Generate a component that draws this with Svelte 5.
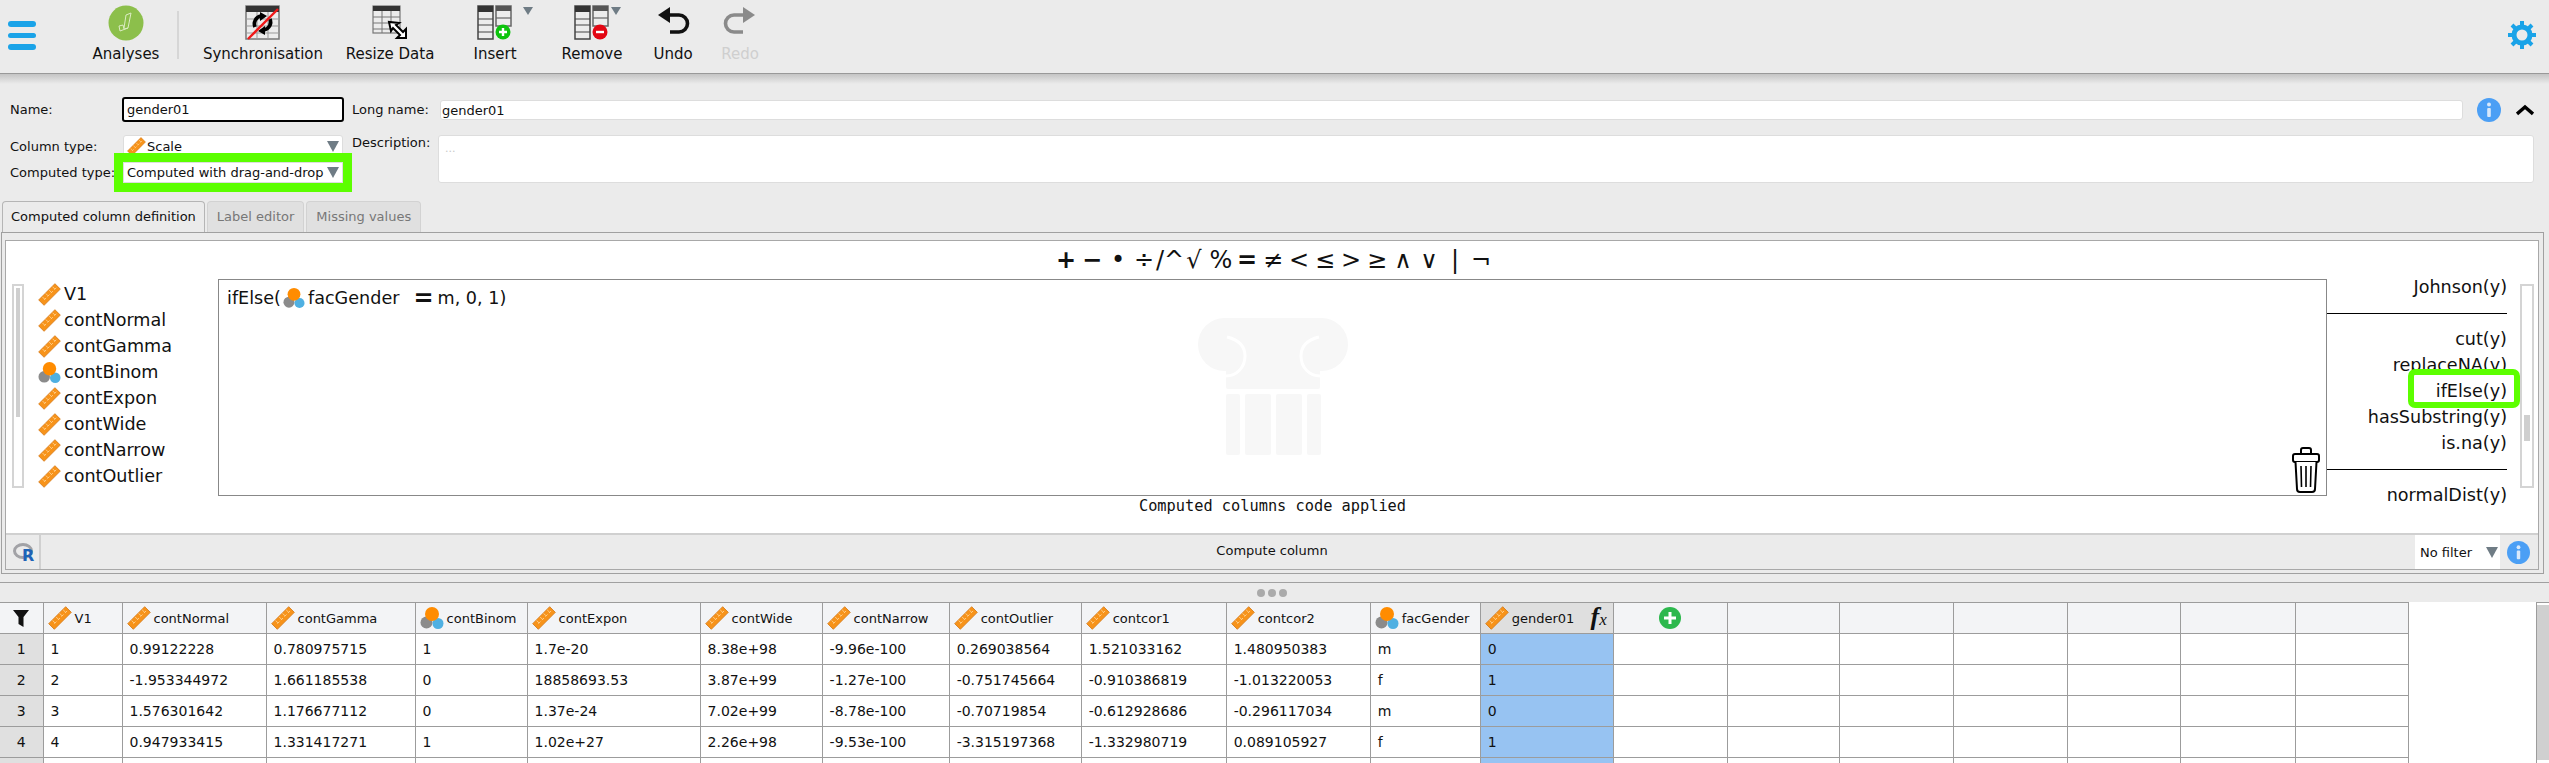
<script>
  const columns = [
    { name: 'V1', type: 'scale', width: 79 },
    { name: 'contNormal', type: 'scale', width: 144 },
    { name: 'contGamma', type: 'scale', width: 149 },
    { name: 'contBinom', type: 'nominal', width: 112 },
    { name: 'contExpon', type: 'scale', width: 173 },
    { name: 'contWide', type: 'scale', width: 122 },
    { name: 'contNarrow', type: 'scale', width: 127 },
    { name: 'contOutlier', type: 'scale', width: 132 },
    { name: 'contcor1', type: 'scale', width: 145 },
    { name: 'contcor2', type: 'scale', width: 144 },
    { name: 'facGender', type: 'nominal', width: 110 },
    { name: 'gender01', type: 'scale', width: 133, computed: true }
  ];
  const emptyWidths = [114, 112, 114, 114, 113, 115, 113];

  const rows = [
    ['1', '0.99122228', '0.780975715', '1', '1.7e-20', '8.38e+98', '-9.96e-100', '0.269038564', '1.521033162', '1.480950383', 'm', '0'],
    ['2', '-1.953344972', '1.661185538', '0', '18858693.53', '3.87e+99', '-1.27e-100', '-0.751745664', '-0.910386819', '-1.013220053', 'f', '1'],
    ['3', '1.576301642', '1.176677112', '0', '1.37e-24', '7.02e+99', '-8.78e-100', '-0.70719854', '-0.612928686', '-0.296117034', 'm', '0'],
    ['4', '0.947933415', '1.331417271', '1', '1.02e+27', '2.26e+98', '-9.53e-100', '-3.315197368', '-1.332980719', '0.089105927', 'f', '1'],
    ['', '', '', '', '', '', '', '', '', '', '', '']
  ];

  const variables = [
    { name: 'V1', type: 'scale' },
    { name: 'contNormal', type: 'scale' },
    { name: 'contGamma', type: 'scale' },
    { name: 'contBinom', type: 'nominal' },
    { name: 'contExpon', type: 'scale' },
    { name: 'contWide', type: 'scale' },
    { name: 'contNarrow', type: 'scale' },
    { name: 'contOutlier', type: 'scale' }
  ];

  const functions = ['Johnson(y)', null, 'cut(y)', 'replaceNA(y)', 'ifElse(y)', 'hasSubstring(y)', 'is.na(y)', null, 'normalDist(y)'];

  // shift = distance to pull a glyph towards its neighbour
  const operators = [
    { g: '+', bold: true, shift: 0 },
    { g: '−', bold: true, shift: 0 },
    { g: '•', shift: 0 },
    { g: '÷', shift: 0 },
    { g: '/', shift: -10 },
    { g: '^', shift: -12 },
    { g: '√', shift: -6 },
    { g: '%', shift: 1 },
    { g: '=', bold: true, shift: 0 },
    { g: '≠', shift: 0 },
    { g: '<', shift: 0 },
    { g: '≤', shift: 0 },
    { g: '>', shift: 0 },
    { g: '≥', shift: 0 },
    { g: '∧', shift: 0 },
    { g: '∨', shift: 0 },
    { g: '|', shift: 0 },
    { g: '¬', shift: 0 }
  ];
</script>

{#snippet ruler(size)}
  <svg class="type-icon" width={size} height={size} viewBox="0 0 24 24">
    <g transform="rotate(45 12 12)">
      <rect x="8" y="0" width="8" height="24" fill="#f7931a" stroke="#d0700a" stroke-width="0.700" />
      <path d="M12 2v3M12 7v3M12 12v3M12 17v3M8.500 4h3.500M8.500 9h3.500M8.500 14h3.500M8.500 19h3.500" stroke="#ffcf8c" stroke-width="0.900" fill="none" />
    </g>
  </svg>
{/snippet}

{#snippet nominal(size)}
  <svg class="type-icon" width={size} height={size} viewBox="0 0 24 24">
    <circle cx="6.500" cy="16.500" r="6" fill="#8b8b8b" />
    <circle cx="18" cy="17.500" r="5.500" fill="#4fb0e2" />
    <circle cx="12" cy="8" r="7" fill="#ff8c00" />
  </svg>
{/snippet}

{#snippet typeIcon(type, size)}
  {#if type === 'scale'}
    {@render ruler(size)}
  {:else}
    {@render nominal(size)}
  {/if}
{/snippet}

{#snippet info(size)}
  <svg width={size} height={size} viewBox="0 0 24 24">
    <circle cx="12" cy="12" r="12" fill="#4b9ff5" />
    <rect x="10.200" y="10" width="3.600" height="9" rx="1" fill="#d9e9fb" />
    <circle cx="12" cy="6.500" r="2" fill="#d9e9fb" />
  </svg>
{/snippet}

{#snippet splitTable()}
  <rect x="1" y="1" width="15" height="33" fill="#ececec" stroke="#444" stroke-width="1.500" />
  <rect x="1" y="1" width="15" height="6" fill="#333" />
  <path d="M1 14h15M1 20h15M1 27h15" stroke="#444" stroke-width="1.200" />
  <rect x="19" y="1" width="15" height="20" fill="#ececec" stroke="#666" stroke-width="1.500" />
  <rect x="19" y="1" width="15" height="5" fill="#555" />
  <path d="M19 13h15" stroke="#666" stroke-width="1.200" />
{/snippet}

<div class="page">
  <header class="toolbar">
    <div class="menu">
      <span></span><span></span><span></span>
    </div>
    <div class="tool">
      <svg width="36" height="36" viewBox="0 0 36 36">
        <circle cx="18" cy="18" r="17.500" fill="#8cbf4b" />
        <path d="M11 21l4-1 1 4 4-1 3-15-5 2-2 13M11 21l1 5 8-3" stroke="#dcecc4" stroke-width="1" fill="none" />
      </svg>
      <span>Analyses</span>
    </div>
    <div class="tool-sep"></div>
    <div class="tool">
      <svg width="36" height="36" viewBox="0 0 36 36">
        <rect x="1" y="1" width="33" height="33" fill="#ececec" stroke="#777" stroke-width="1.500" />
        <rect x="1" y="1" width="33" height="6" fill="#333" />
        <path d="M1 14h33M1 21h33M1 28h33M12 7v27M23 7v27" stroke="#999" stroke-width="1" />
        <path d="M10 22a8 8 0 0 1 6-11" stroke="#000" stroke-width="3.600" fill="none" />
        <path d="M25 14a8 8 0 0 1-6 11" stroke="#000" stroke-width="3.600" fill="none" />
        <path d="M15 7l7 4-7 5zM20 30l-7-4 7-5z" fill="#000" />
        <path d="M3 34L33 4" stroke="#f01818" stroke-width="2.400" />
      </svg>
      <span>Synchronisation</span>
    </div>
    <div class="tool">
      <svg width="36" height="36" viewBox="0 0 36 36">
        <rect x="1" y="1" width="27" height="27" fill="#ececec" stroke="#777" stroke-width="1.200" />
        <rect x="1" y="1" width="27" height="5" fill="#333" />
        <path d="M1 12h27M1 18h27M1 24h27M10 6v22M19 6v22" stroke="#777" stroke-width="1" />
        <path d="M18 20l2 9 2-3 7 7-3 3 9 0 0-9-3 3-7-7 3-2z" fill="#fff" stroke="#000" stroke-width="2" transform="translate(-1 -3)" />
      </svg>
      <span>Resize Data</span>
    </div>
    <div class="tool">
      <svg class="wide" width="36" height="36" viewBox="0 0 36 36">
        {@render splitTable()}
        <circle cx="26" cy="27" r="7.500" fill="#0cc40c" />
        <path d="M26 23v8M22 27h8" stroke="#fff" stroke-width="2.400" />
      </svg>
      <i class="drop"></i>
      <span>Insert</span>
    </div>
    <div class="tool">
      <svg class="wide" width="36" height="36" viewBox="0 0 36 36">
        {@render splitTable()}
        <circle cx="26" cy="27" r="7.500" fill="#e30613" />
        <path d="M22 27h8" stroke="#fff" stroke-width="2.400" />
      </svg>
      <i class="drop"></i>
      <span>Remove</span>
    </div>
    <div class="tool">
      <svg width="36" height="36" viewBox="0 0 36 36">
        <path d="M10 10H24a8.500 8.500 0 0 1 0 17H15" stroke="#111" stroke-width="3.600" fill="none" />
        <path d="M15 2L3 10l12 8z" fill="#111" />
      </svg>
      <span>Undo</span>
    </div>
    <div class="tool disabled">
      <svg width="36" height="36" viewBox="0 0 36 36">
        <path d="M26 10H12a8.500 8.500 0 0 0 0 17h9" stroke="#8a8a8a" stroke-width="3.600" fill="none" />
        <path d="M21 2l12 8-12 8z" fill="#8a8a8a" />
      </svg>
      <span>Redo</span>
    </div>
    <div class="spacer"></div>
    <svg class="gear" width="28" height="28" viewBox="0 0 28 28">
      <circle cx="14" cy="14" r="8" fill="none" stroke="#1aa3e8" stroke-width="5" />
      <path d="M14 0v5M14 23v5M0 14h5M23 14h5M4 4l3.500 3.500M20.500 20.500L24 24M24 4l-3.500 3.500M7.500 20.500L4 24" stroke="#1aa3e8" stroke-width="4" />
    </svg>
  </header>
  <div class="toolbar-shadow"></div>

  <section class="form">
    <div class="form-row">
      <label class="label" for="col-name">Name:</label>
      <div class="input focused" id="col-name">gender01</div>
      <span class="label long-label">Long name:</span>
      <div class="input grow">gender01</div>
      <span class="round-info">{@render info(24)}</span>
      <svg class="collapse" width="18" height="12" viewBox="0 0 18 12">
        <path d="M1 10l8-7 8 7" stroke="#000" stroke-width="3.400" fill="none" />
      </svg>
    </div>
    <div class="form-body">
      <div class="selects">
        <div class="select-row">
          <span class="label">Column type:</span>
          <div class="select">
            {@render ruler(19)}
            <span>Scale</span>
            <i class="arrow"></i>
          </div>
        </div>
        <div class="select-row short">
          <span class="label">Computed type:</span>
          <div class="select highlighted">
            <span>Computed with drag-and-drop</span>
            <i class="arrow"></i>
          </div>
        </div>
      </div>
      <span class="label desc-label">Description:</span>
      <div class="description">...</div>
    </div>
  </section>

  <nav class="tabs">
    <div class="tab active">Computed column definition</div>
    <div class="tab">Label editor</div>
    <div class="tab">Missing values</div>
  </nav>

  <section class="outer">
    <div class="inner">
      <div class="operators">
        {#each operators as op}
          <span class="op" class:bold={op.bold} style="margin-left: {op.shift}px">{op.g}</span>
        {/each}
      </div>
      <div class="workspace">
        <div class="vars">
          <div class="scrollbar"><div class="thumb left-thumb"></div></div>
          <ul class="var-list">
            {#each variables as v}
              <li>{@render typeIcon(v.type, 23)}<span>{v.name}</span></li>
            {/each}
          </ul>
        </div>
        <div class="center">
          <div class="editor">
            <svg class="watermark" width="150" height="138" viewBox="0 0 150 138">
              <rect x="0" y="0" width="150" height="53" rx="26.500" fill="#f7f7f7" />
              <rect x="28" y="20" width="94" height="51" rx="2" fill="#f7f7f7" />
              <path d="M29 19c8 2 18 6 18 19 0 12-9 20-19 20M121 19c-8 2-18 6-18 19 0 12 9 20 19 20" fill="none" stroke="#fff" stroke-width="3" />
              <rect x="28" y="76" width="14" height="61" rx="2" fill="#f7f7f7" />
              <rect x="47" y="76" width="26" height="61" rx="2" fill="#f7f7f7" />
              <rect x="78" y="76" width="26" height="61" rx="2" fill="#f7f7f7" />
              <rect x="109" y="76" width="14" height="61" rx="2" fill="#f7f7f7" />
            </svg>
            <div class="formula">
              <span>ifElse(</span>
              {@render nominal(22)}
              <span>facGender</span>
              <b class="equals">=</b>
              <span>m, 0, 1)</span>
            </div>
            <svg class="trash" width="28" height="46" viewBox="0 0 28 46">
              <path d="M9 7V3a2 2 0 0 1 2-2h6a2 2 0 0 1 2 2v4" fill="none" stroke="#000" stroke-width="2" />
              <rect x="1" y="7" width="26" height="8" rx="2" fill="#fff" stroke="#000" stroke-width="2" />
              <path d="M3.500 15l1.500 27a3 3 0 0 0 3 3h12a3 3 0 0 0 3-3l1.500-27" fill="#fff" stroke="#000" stroke-width="2" />
              <path d="M9 19l.5 21M14 19v21M19 19l-.5 21" stroke="#000" stroke-width="1.600" />
            </svg>
          </div>
          <div class="status">Computed columns code applied</div>
        </div>
        <div class="funcs">
          <ul class="func-list">
            {#each functions as f}
              {#if f === null}
                <li class="func-sep"><hr /></li>
              {:else}
                <li class:picked={f === 'ifElse(y)'}>{f}</li>
              {/if}
            {/each}
          </ul>
          <div class="scrollbar right"><div class="thumb right-thumb"></div></div>
        </div>
      </div>
      <footer class="compute-bar">
        <div class="r-cell">
          <svg width="24" height="24" viewBox="0 0 24 24">
            <ellipse cx="12" cy="11" rx="8.500" ry="6.500" fill="none" stroke="#a2a2a6" stroke-width="3" />
            <text x="11" y="21" class="r-letter">R</text>
          </svg>
        </div>
        <div class="compute-label">Compute column</div>
        <div class="filter">
          <span>No filter</span>
          <i class="arrow"></i>
        </div>
        <span class="filter-info">{@render info(23)}</span>
      </footer>
    </div>
  </section>

  <div class="splitter">
    <span></span><span></span><span></span>
  </div>

  <section class="grid-area">
    <div class="table-clip">
      <table>
        <colgroup>
          <col style="width: 43px" />
          {#each columns as c}<col style="width: {c.width}px" />{/each}
          {#each emptyWidths as w}<col style="width: {w}px" />{/each}
        </colgroup>
        <thead>
          <tr>
            <th class="filter-head">
              <svg width="16" height="18" viewBox="0 0 16 18"><path d="M0 1h16l-5.500 7v10l-5-3V8z" fill="#111" /></svg>
            </th>
            {#each columns as c}
              <th class:active-head={c.computed}>
                <div class="head-cell">
                  {@render typeIcon(c.type, 24)}
                  <span>{c.name}</span>
                  {#if c.computed}<em class="fx">f<small>x</small></em>{/if}
                </div>
              </th>
            {/each}
            <th class="add-head">
              <svg width="22" height="22" viewBox="0 0 22 22">
                <circle cx="11" cy="11" r="11" fill="#2db84d" />
                <path d="M11 5v12M5 11h12" stroke="#fff" stroke-width="3" />
              </svg>
            </th>
            {#each emptyWidths.slice(1) as _}<th></th>{/each}
          </tr>
        </thead>
        <tbody>
          {#each rows as row, i}
            <tr>
              <td class="row-num">{row[0]}</td>
              {#each row as cell, j}
                <td class:selected={j === row.length - 1}>{cell}</td>
              {/each}
              {#each emptyWidths as _}<td></td>{/each}
            </tr>
          {/each}
        </tbody>
      </table>
    </div>
    <div class="grid-scroll"><div class="grid-thumb"></div></div>
  </section>
</div>

<style>
  :global(body) {
    margin: 0;
    background: #ebebeb;
  }

  .page {
    width: 2549px;
    height: 763px;
    overflow: hidden;
    font-family: 'DejaVu Sans', sans-serif;
    font-size: 13px;
    color: #111;
    background: #ebebeb;
  }

  /* toolbar */
  .toolbar {
    display: grid;
    grid-template-columns: 78px 96px 14px 150px 104px 106px 88px 74px 60px 1fr auto;
    align-items: start;
    height: 74px;
    box-sizing: border-box;
    border-bottom: 1px solid #999;
  }

  .toolbar-shadow {
    height: 10px;
    background: linear-gradient(#c4c4c4, #ebebeb);
  }

  .menu {
    display: flex;
    flex-direction: column;
    gap: 6px;
    width: 28px;
    margin: 21px 0 0 8px;
  }

  .menu span {
    height: 5.500px;
    border-radius: 3px;
    background: #1aa3e8;
  }

  .tool {
    position: relative;
    display: flex;
    flex-direction: column;
    align-items: center;
    padding-top: 5px;
    font-size: 15px;
    line-height: 17px;
  }

  .tool svg {
    margin-bottom: 5px;
  }

  .tool.disabled {
    color: #cfcfcf;
  }

  .tool-sep {
    width: 2px;
    height: 48px;
    margin: 11px 0 0 3px;
    background: #d6d6d6;
  }

  .drop {
    position: absolute;
    top: 7px;
    right: 15px;
    border: 5px solid transparent;
    border-top: 8px solid #6f7c85;
    border-bottom: 0;
  }

  .gear {
    margin: 21px 13px 0 0;
  }

  /* form */
  .form {
    padding: 13px 15px 0 10px;
  }

  .form-row {
    display: flex;
    align-items: center;
    height: 25px;
  }

  .label {
    width: 112px;
    flex: none;
    font-size: 13px;
  }

  .input {
    box-sizing: border-box;
    width: 222px;
    height: 20px;
    padding-left: 1px;
    line-height: 19px;
    background: #fff;
    border: 1px solid #ddd;
    border-radius: 3px;
  }

  .input.focused {
    height: 25px;
    padding-left: 3px;
    line-height: 21px;
    border: 2px solid #000;
  }

  .input.grow {
    flex: 1;
  }

  .long-label {
    width: 88px;
    margin-left: 8px;
  }

  .round-info {
    display: flex;
    margin-left: 14px;
  }

  .collapse {
    margin-left: 15px;
  }

  .form-body {
    display: flex;
    margin-top: 13px;
  }

  .selects {
    display: flex;
    flex-direction: column;
    gap: 5px;
    flex: none;
  }

  .select-row {
    display: flex;
    align-items: center;
    height: 22px;
  }

  .select-row.short {
    height: 21px;
  }

  .select-row .label {
    width: 113px;
  }

  .select {
    display: flex;
    align-items: center;
    gap: 1px;
    box-sizing: border-box;
    width: 220px;
    height: 100%;
    padding: 0 3px;
    background: #fff;
    border: 1px solid #ddd;
    border-radius: 3px;
  }

  .select.highlighted {
    outline: 9px solid #5cff00;
    outline-offset: 0;
    border-radius: 0;
  }

  .arrow {
    margin-left: auto;
    border: 6px solid transparent;
    border-top: 11px solid #6f7c85;
    border-bottom: 0;
  }

  .desc-label {
    width: 86px;
    margin-left: 9px;
    line-height: 15px;
  }

  .description {
    box-sizing: border-box;
    flex: 1;
    height: 48px;
    padding: 6px 6px;
    color: #c8c8c8;
    font-size: 11px;
    background: #fff;
    border: 1px solid #ddd;
    border-radius: 3px;
  }

  /* tabs */
  .tabs {
    display: flex;
    gap: 2px;
    margin: 18px 0 0 2px;
  }

  .tab {
    box-sizing: border-box;
    height: 31px;
    padding: 0 9px;
    line-height: 30px;
    color: #777;
    background: #e0e0e0;
    border: 1px solid #d2d2d2;
    border-bottom: 0;
    border-radius: 4px 4px 0 0;
  }

  .tab.active {
    color: #111;
    background: #ebebeb;
    border-color: #b5b5b5;
    padding: 0 8px;
  }

  /* computed column panel */
  .outer {
    box-sizing: border-box;
    width: 2543px;
    height: 342px;
    margin-left: 1px;
    padding: 7px 4px 3px 3px;
    border: 1px solid #a0a0a0;
  }

  .inner {
    box-sizing: border-box;
    height: 330px;
    background: #fff;
    border: 1px solid #a8a8a8;
  }

  .operators {
    display: flex;
    justify-content: center;
    align-items: center;
    height: 38px;
    padding-left: 3px;
    font-size: 24px;
    color: #111;
  }

  .op {
    width: 26px;
    flex: none;
    text-align: center;
  }

  .op.bold {
    font-weight: bold;
  }

  .workspace {
    display: grid;
    grid-template-columns: 212px 2109px 1fr;
    height: 254px;
  }

  .vars {
    display: flex;
    align-items: flex-start;
  }

  .scrollbar {
    box-sizing: border-box;
    flex: none;
    width: 12px;
    height: 204px;
    margin: 5px 0 0 6px;
    padding: 2px;
    background: #fff;
    border: 2px solid #d4d4d4;
  }

  .thumb {
    background: #cfcfcf;
  }

  .left-thumb {
    height: 129px;
  }

  .right-thumb {
    height: 26px;
    margin-top: 127px;
  }

  .scrollbar.right {
    margin: 5px 0 0 13px;
    width: 14px;
  }

  .var-list {
    flex: 1;
    margin: 2px 0 0 14px;
    padding: 0;
    list-style: none;
    font-size: 17.600px;
  }

  .var-list li {
    display: flex;
    align-items: center;
    gap: 3px;
    height: 26px;
  }

  .center {
    display: flex;
    flex-direction: column;
    align-items: stretch;
  }

  .editor {
    position: relative;
    box-sizing: border-box;
    height: 217px;
    background: #fff;
    border: 1px solid #888;
  }

  .watermark {
    position: absolute;
    top: 38px;
    left: 979px;
  }

  .formula {
    position: relative;
    display: flex;
    align-items: center;
    height: 26px;
    padding: 5px 0 0 8px;
    font-size: 17.600px;
  }

  .formula svg {
    margin: 0 3px 0 2px;
  }

  .equals {
    margin: 0 4px 0 14px;
    font-size: 24px;
    line-height: 20px;
  }

  .trash {
    position: absolute;
    right: 6px;
    bottom: 2px;
  }

  .status {
    height: 37px;
    padding-top: 1px;
    font-family: 'DejaVu Sans Mono', monospace;
    font-size: 15.300px;
    line-height: 18px;
    text-align: center;
  }

  .funcs {
    display: flex;
    align-items: flex-start;
    min-width: 0;
  }

  .func-list {
    width: 180px;
    flex: none;
    margin: -5px 0 0;
    padding: 0;
    list-style: none;
    font-size: 17.600px;
    text-align: right;
  }

  .func-list li {
    height: 26px;
    line-height: 26px;
  }

  .func-sep {
    display: flex;
    align-items: center;
  }

  .func-sep hr {
    width: 100%;
    height: 1px;
    margin: 0;
    border: 0;
    background: #000;
  }

  .func-list li.picked {
    position: relative;
    z-index: 1;
    box-sizing: border-box;
    width: 100px;
    height: 27px;
    margin: -3px -7px 2px auto;
    padding: 3px 7px 0 0;
    background: #fff;
    outline: 6px solid #5cff00;
    border-radius: 1px;
  }

  .compute-bar {
    display: flex;
    align-items: stretch;
    box-sizing: border-box;
    height: 36px;
    background: #ebebeb;
    border-top: 2px solid #d0d0d0;
  }

  .r-cell {
    display: flex;
    align-items: center;
    justify-content: center;
    box-sizing: border-box;
    width: 35px;
    border-right: 2px solid #d0d0d0;
  }

  .r-letter {
    font-family: 'DejaVu Sans', sans-serif;
    font-weight: bold;
    font-size: 16px;
    fill: #1e63b8;
  }

  .compute-label {
    flex: 1;
    padding-left: 88px;
    line-height: 32px;
    text-align: center;
    font-size: 13px;
  }

  .filter {
    display: flex;
    align-items: center;
    box-sizing: border-box;
    width: 85px;
    padding: 0 2px 0 5px;
    background: #fff;
    font-size: 13px;
  }

  .filter-info {
    display: flex;
    align-items: center;
    width: 38px;
    padding-left: 7px;
    box-sizing: border-box;
  }

  /* splitter */
  .splitter {
    display: flex;
    justify-content: center;
    align-items: center;
    gap: 3px;
    box-sizing: border-box;
    height: 20px;
    margin-top: 8px;
    padding-right: 5px;
    border-top: 1px solid #a0a0a0;
  }

  .splitter span {
    width: 8px;
    height: 8px;
    border-radius: 50%;
    background: #aaa;
  }

  /* data grid */
  .grid-area {
    display: flex;
    height: 161px;
    background: #fff;
  }

  .table-clip {
    flex: 1;
    overflow: hidden;
  }

  table {
    table-layout: fixed;
    width: 2409px;
    border-collapse: collapse;
    font-size: 14px;
  }

  th,
  td {
    box-sizing: border-box;
    height: 31px;
    padding: 0 7px;
    border: 1px solid #9c9c9c;
    text-align: left;
    font-weight: normal;
    white-space: nowrap;
    overflow: hidden;
  }

  th {
    padding: 0 4px;
    font-size: 13px;
    background: #f3f4f6;
  }

  th:first-child,
  td:first-child {
    border-left: 0;
  }

  .filter-head {
    text-align: center;
  }

  .filter-head svg,
  .add-head svg {
    display: block;
    margin: 0 auto;
  }

  .head-cell {
    display: flex;
    align-items: center;
    gap: 3px;
  }

  .active-head {
    background: #dfdfdf;
  }

  .fx {
    margin-left: auto;
    padding-right: 2px;
    font-family: 'Liberation Serif', serif;
    font-weight: bold;
    font-size: 26px;
    line-height: 20px;
  }

  .fx small {
    font-size: 17px;
    font-weight: normal;
  }

  .row-num {
    padding: 0;
    text-align: center;
    background: #e0e0e0;
  }

  .selected {
    background: #97c3f2;
  }

  .grid-scroll {
    box-sizing: border-box;
    width: 13px;
    padding-top: 2px;
    border-left: 1px solid #9c9c9c;
    border-top: 1px solid #9c9c9c;
    background: #fff;
  }

  .grid-thumb {
    height: 155px;
    background: #d0d0d0;
  }
</style>
